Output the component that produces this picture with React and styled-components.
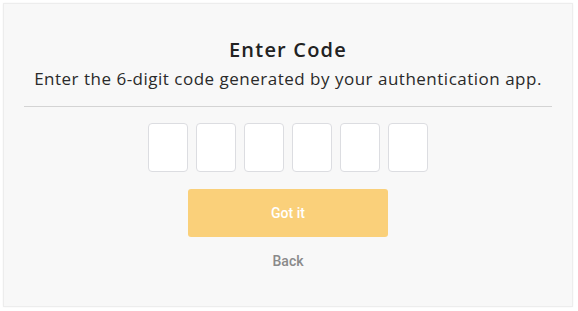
import React from "react";
import styled, { createGlobalStyle } from "styled-components";

const Global = createGlobalStyle`
  html, body { margin: 0; padding: 0; background: #ffffff; }
  body { font-family: "Open Sans", "Noto Sans", sans-serif; }
  * { box-sizing: border-box; }
`;

const Page = styled.div`
  width: 578px;
  height: 311px;
  padding: 3px 5px 4px 3px;
`;

const Card = styled.div`
  height: 100%;
  background: #f8f8f8;
  border: 1px solid #ededed;
  box-shadow: 0 0 2px rgba(0, 0, 0, 0.05);
  display: flex;
  flex-direction: column;
  align-items: center;
  padding: 33px 20px 0;
`;

const Title = styled.h1`
  margin: 0;
  font-family: "Open Sans", sans-serif;
  font-size: 20px;
  font-weight: 600;
  letter-spacing: 1.2px;
  color: #222222;
  line-height: 26px;
`;

const Subtitle = styled.p`
  margin: 4px 0 0;
  font-family: "Open Sans", sans-serif;
  font-size: 17px;
  font-weight: 400;
  letter-spacing: 0.5px;
  color: #2a2a2a;
  line-height: 24px;
`;

const Divider = styled.hr`
  align-self: stretch;
  border: none;
  border-top: 1px solid #d4d4d4;
  margin: 15px 0 16px;
`;

const Boxes = styled.div`
  display: flex;
  gap: 8px;
`;

const Digit = styled.input`
  width: 40px;
  height: 49px;
  border: 1px solid #dcdde1;
  border-radius: 4px;
  background: #ffffff;
  outline: none;
  text-align: center;
  font-size: 20px;
`;

const Button = styled.button`
  margin-top: 17px;
  width: 200px;
  height: 48px;
  border: none;
  border-radius: 3px;
  background: #fad07a;
  color: #ffffff;
  font-family: "Roboto", sans-serif;
  font-weight: 500;
  font-size: 14px;
`;

const Back = styled.button`
  margin-top: 16px;
  border: none;
  background: none;
  color: #8a8a8a;
  font-family: "Roboto", sans-serif;
  font-weight: 500;
  font-size: 14px;
  padding: 0;
`;

export default function App() {
  return (
    <>
      <Global />
      <Page>
        <Card>
          <Title>Enter Code</Title>
          <Subtitle>Enter the 6-digit code generated by your authentication app.</Subtitle>
          <Divider />
          <Boxes>
            {[0, 1, 2, 3, 4, 5].map((i) => (
              <Digit key={i} maxLength={1} aria-label={`Digit ${i + 1}`} />
            ))}
          </Boxes>
          <Button>Got it</Button>
          <Back>Back</Back>
        </Card>
      </Page>
    </>
  );
}
